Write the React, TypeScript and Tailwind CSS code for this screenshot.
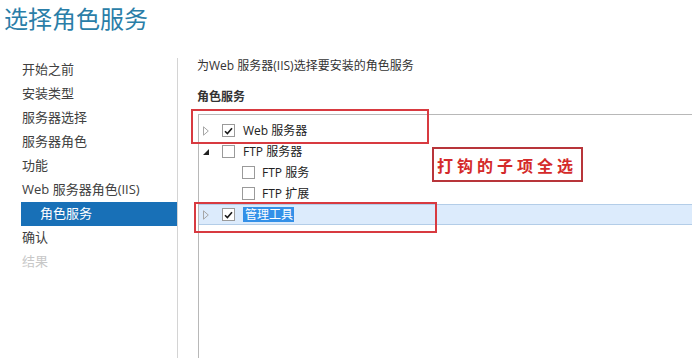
import React from "react";

const font = { fontFamily: '"Open Sans", "Noto Sans CJK SC", sans-serif' };

const steps = [
  { label: "开始之前" },
  { label: "安装类型" },
  { label: "服务器选择" },
  { label: "服务器角色" },
  { label: "功能" },
  { label: "Web 服务器角色(IIS)" },
  { label: "角色服务", active: true, sub: true },
  { label: "确认" },
  { label: "结果", disabled: true },
];

function Check({ on }: { on?: boolean }) {
  return (
    <span className="w-[13px] h-[13px] border border-[#9a9a9a] bg-white flex items-center justify-center shrink-0">
      {on && (
        <svg width="9" height="8" viewBox="0 0 9 8">
          <path d="M1 4.2 L3.4 6.6 L8 1.2" fill="none" stroke="#1a1a1a" strokeWidth="1.6" />
        </svg>
      )}
    </span>
  );
}

function Arrow({ open }: { open?: boolean }) {
  return open ? (
    <svg width="6" height="6" viewBox="0 0 6 6">
      <path d="M6 0 L6 6 L0 6 Z" fill="#222" />
    </svg>
  ) : (
    <svg width="6" height="10" viewBox="0 0 6 10">
      <path d="M0.5 0.8 L5.3 5 L0.5 9.2 Z" fill="none" stroke="#a6a6a6" strokeWidth="1" />
    </svg>
  );
}

function TreeRow({ text, on, open, child, selected }: { text: string; on?: boolean; open?: boolean; child?: boolean; selected?: boolean }) {
  return (
    <div className={"h-[21px] flex items-center text-[12px] text-[#222] " + (selected ? "bg-[#dcebfc] border-y border-[#b3cde8]" : "")}>
      {child ? (
        <span className="w-[43px] shrink-0" />
      ) : (
        <span className="w-[23px] shrink-0 pl-[4px] flex items-center">
          <Arrow open={open} />
        </span>
      )}
      <Check on={on} />
      <span className={(child ? "ml-[7px] " : "ml-[8px] ") + (selected ? "bg-[#3390e8] text-white px-px -ml-px leading-[15px]" : "")}>
        {selected ? <span className="ml-px">{text}</span> : text}
      </span>
    </div>
  );
}

export default function App() {
  return (
    <div className="relative w-[692px] h-[358px] overflow-hidden bg-white flex flex-col" style={font}>
      <div className="h-[58px] shrink-0 pl-[4px] pt-[3px] text-[24px] leading-[32px] text-[#2a7ea8]">选择角色服务</div>

      <div className="flex flex-1 min-h-0">
        <div className="w-[157px] ml-[21px] shrink-0 border-r border-[#d4d4d4]">
          {steps.map((s) => (
            <div
              key={s.label}
              className={
                "h-[24px] flex items-center text-[13px] " +
                (s.active ? "bg-[#1870b7] text-white pl-[19px]" : s.disabled ? "text-[#c8c8c8] pl-px" : "text-[#404040] pl-px")
              }
            >
              {s.label}
            </div>
          ))}
        </div>

        <div className="flex-1 flex flex-col min-w-0">
          <div className="pl-[19px] text-[12px] leading-[16px] text-[#333]">为Web 服务器(IIS)选择要安装的角色服务</div>
          <div className="pl-[19px] mt-[15px] text-[12px] leading-[16px] font-bold text-[#333]">角色服务</div>
          <div className="ml-[20px] mt-[9px] flex-1 border-t border-l border-[#b8b8b8] pt-[5px]">
            <TreeRow text="Web 服务器" on />
            <TreeRow text="FTP 服务器" open />
            <TreeRow text="FTP 服务" child />
            <TreeRow text="FTP 扩展" child />
            <TreeRow text="管理工具" on selected />
          </div>
        </div>
      </div>

      <div className="absolute left-[191px] top-[109px] w-[238px] h-[35px] border-2 border-[#d83a40]" />
      <div className="absolute left-[194px] top-[202px] w-[243px] h-[31px] border-2 border-[#d83a40]" />
      <div className="absolute left-[432px] top-[147px] w-[151px] h-[35px] border-2 border-[#b8353a] bg-white flex items-center pl-[3px]">
        <span className="text-[16px] font-bold tracking-[4px] text-[#d42a2a]" style={{ fontFamily: '"Noto Sans CJK SC", serif' }}>
          打钩的子项全选
        </span>
      </div>
    </div>
  );
}
